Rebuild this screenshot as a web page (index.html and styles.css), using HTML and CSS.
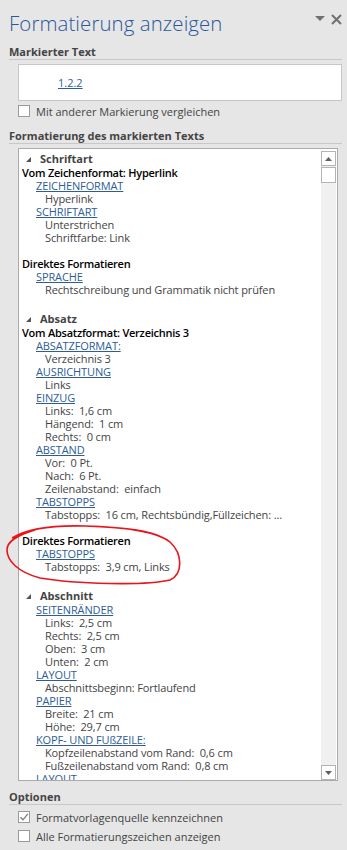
FILE: index.html
```html
<!DOCTYPE html>
<html lang="de">
<head>
  <meta charset="UTF-8">
  <meta name="viewport" content="width=device-width, initial-scale=1.0">
  <title>Formatierung anzeigen</title>
  <link rel="stylesheet" href="styles.css">
</head>
<body>

  <div class="pane">
    <!-- Titelleiste des Aufgabenbereichs -->
    <div class="title-bar">
      <h1>Formatierung anzeigen</h1>
      <div class="title-icons">
        <svg width="10" height="6" viewBox="0 0 10 6"><polygon points="0,0 10,0 5,5" fill="#707070"/></svg>
        <svg width="11" height="11" viewBox="0 0 11 11"><path d="M1 1 L10 10 M10 1 L1 10" stroke="#707070" stroke-width="2"/></svg>
      </div>
    </div>

    <h2 class="section-head">Markierter Text</h2>
    <div class="sample-box">
      <a class="sample-link">1.2.2</a>
    </div>
    <label class="check-row first">
      <span class="checkbox"></span>
      Mit anderer Markierung vergleichen
    </label>

    <h2 class="section-head spaced">Formatierung des markierten Texts</h2>
    <div class="list-box">
      <div class="list-content">
        <div class="sect"><span class="tri"></span>Schriftart</div>
        <div class="grp">Vom Zeichenformat: Hyperlink</div>
        <div class="lnk"><a>ZEICHENFORMAT</a></div>
        <div class="val">Hyperlink</div>
        <div class="lnk"><a>SCHRIFTART</a></div>
        <div class="val">Unterstrichen</div>
        <div class="val">Schriftfarbe: Link</div>
        <div class="gap"></div>
        <div class="grp">Direktes Formatieren</div>
        <div class="lnk"><a>SPRACHE</a></div>
        <div class="val">Rechtschreibung und Grammatik nicht prüfen</div>
        <div class="gap"></div>

        <div class="sect"><span class="tri"></span>Absatz</div>
        <div class="grp">Vom Absatzformat: Verzeichnis 3</div>
        <div class="lnk"><a>ABSATZFORMAT:</a></div>
        <div class="val">Verzeichnis 3</div>
        <div class="lnk"><a>AUSRICHTUNG</a></div>
        <div class="val">Links</div>
        <div class="lnk"><a>EINZUG</a></div>
        <div class="val">Links:  1,6 cm</div>
        <div class="val">Hängend:  1 cm</div>
        <div class="val">Rechts:  0 cm</div>
        <div class="lnk"><a>ABSTAND</a></div>
        <div class="val">Vor:  0 Pt.</div>
        <div class="val">Nach:  6 Pt.</div>
        <div class="val">Zeilenabstand:  einfach</div>
        <div class="lnk"><a>TABSTOPPS</a></div>
        <div class="val">Tabstopps:  16 cm, Rechtsbündig,Füllzeichen: ...</div>
        <div class="gap"></div>
        <div class="grp">Direktes Formatieren</div>
        <div class="lnk"><a>TABSTOPPS</a></div>
        <div class="val">Tabstopps:  3,9 cm, Links</div>
        <div class="gap"></div>

        <div class="sect"><span class="tri"></span>Abschnitt</div>
        <div class="lnk"><a>SEITENRÄNDER</a></div>
        <div class="val">Links:  2,5 cm</div>
        <div class="val">Rechts:  2,5 cm</div>
        <div class="val">Oben:  3 cm</div>
        <div class="val">Unten:  2 cm</div>
        <div class="lnk"><a>LAYOUT</a></div>
        <div class="val">Abschnittsbeginn: Fortlaufend</div>
        <div class="lnk"><a>PAPIER</a></div>
        <div class="val">Breite:  21 cm</div>
        <div class="val">Höhe:  29,7 cm</div>
        <div class="lnk"><a>KOPF- UND FUßZEILE:</a></div>
        <div class="val">Kopfzeilenabstand vom Rand:  0,6 cm</div>
        <div class="val">Fußzeilenabstand vom Rand:  0,8 cm</div>
        <div class="lnk"><a>LAYOUT</a></div>
      </div>

      <!-- Bildlaufleiste -->
      <div class="scrollbar">
        <div class="sb-btn">
          <svg width="7" height="4" viewBox="0 0 7 4"><polygon points="0,4 7,4 3.5,0" fill="#606060"/></svg>
        </div>
        <div class="sb-thumb"></div>
        <div class="sb-track"></div>
        <div class="sb-btn">
          <svg width="7" height="4" viewBox="0 0 7 4"><polygon points="0,0 7,0 3.5,4" fill="#606060"/></svg>
        </div>
      </div>
    </div>

    <h2 class="section-head options">Optionen</h2>
    <label class="check-row opt">
      <span class="checkbox">
        <svg width="10" height="10" viewBox="0 0 10 10"><path d="M1.5 5.2 L4 7.8 L8.8 1.8" stroke="#7a7a7a" stroke-width="1.3" fill="none"/></svg>
      </span>
      Formatvorlagenquelle kennzeichnen
    </label>
    <label class="check-row opt second">
      <span class="checkbox"></span>
      Alle Formatierungszeichen anzeigen
    </label>
  </div>

  <!-- rote Markierung von Hand -->
  <svg class="annotation" width="182" height="68" viewBox="0 0 182 68">
    <path d="M7 16 C 20 8, 45 3, 80 4 C 115 5, 150 8, 165 20 C 178 32, 178 52, 165 58 C 140 64, 70 62, 35 56 C 12 50, 2 38, 2 28 C 2 20, 10 14, 30 8" stroke="#e8141c" stroke-width="1.6" fill="none"/>
  </svg>

</body>
</html>
```

FILE: styles.css
```css
body {
  margin: 0;
  background-color: #e6e6e6;
  font-family: "Open Sans", "Noto Sans", sans-serif;
  font-size: 11px;
  color: #444444;
  position: relative;
  width: 347px;
  height: 850px;
  overflow: hidden;
}

.pane {
  padding: 0 5px 0 9px;
}

.title-bar {
  height: 46px;
  display: flex;
  align-items: center;
  justify-content: space-between;
}

.title-bar h1 {
  margin: 0;
  font-size: 20.4px;
  font-weight: 300;
  color: #2b579a;
  letter-spacing: 0.1px;
}

.title-icons {
  display: flex;
  align-items: center;
  gap: 6px;
  margin-top: -8px;
  margin-right: 0;
}

.section-head {
  margin: 0;
  font-size: 11px;
  line-height: 12px;
  font-weight: bold;
  color: #444444;
  padding-bottom: 1px;
  border-bottom: 1px solid #c8c8c8;
}

.section-head.spaced {
  margin-top: 13px;
}

.section-head.options {
  margin-top: 10px;
}

.sample-box {
  margin: 4px 0 0 9px;
  height: 37px;
  box-sizing: border-box;
  background: #ffffff;
  border: 1px solid #c6c6c6;
  display: flex;
  align-items: center;
  padding-left: 39px;
}

.sample-link,
.lnk a {
  color: #2e5d96;
  text-decoration: underline;
}

.check-row {
  display: flex;
  align-items: center;
  gap: 6px;
  height: 12px;
  margin-left: 9px;
  color: #444444;
}

.check-row.first {
  margin-top: 4px;
}

.check-row.opt {
  margin-top: 6px;
}

.check-row.second {
  margin-top: 7px;
}

.checkbox {
  width: 12px;
  height: 12px;
  box-sizing: border-box;
  border: 1px solid #9a9a9a;
  background: #ffffff;
  display: flex;
  align-items: center;
  justify-content: center;
}

.list-box {
  margin: 4px 4px 0 9px;
  height: 633px;
  box-sizing: border-box;
  border: 1px solid #ababab;
  background: #ffffff;
  display: flex;
  overflow: hidden;
}

.list-content {
  flex: 1;
  padding-left: 3px;
  overflow: hidden;
  letter-spacing: -0.12px;
}

.list-content > div {
  height: 13px;
  line-height: 13px;
  white-space: pre;
}

.list-content .sect {
  height: 14px;
  line-height: 14px;
  padding-top: 3px;
  padding-left: 4px;
  font-weight: bold;
  color: #444444;
  display: flex;
  align-items: center;
  letter-spacing: 0;
}

.tri {
  width: 0;
  height: 0;
  border-left: 5px solid transparent;
  border-bottom: 5px solid #555555;
  margin-right: 9px;
  margin-top: 1px;
}

.grp {
  font-weight: 600;
  color: #000000;
  letter-spacing: -0.25px;
}

.lnk {
  padding-left: 14px;
}

.val {
  padding-left: 23px;
  color: #444444;
}

.scrollbar {
  width: 15px;
  margin: 2px 1px 0 0;
  display: flex;
  flex-direction: column;
  background: #f0f0f0;
}

.sb-btn {
  height: 15px;
  box-sizing: border-box;
  border: 1px solid #b4b4b4;
  background: #ffffff;
  display: flex;
  align-items: center;
  justify-content: center;
}

.sb-thumb {
  height: 16px;
  margin-top: 1px;
  box-sizing: border-box;
  border: 1px solid #b4b4b4;
  background: #ffffff;
}

.sb-track {
  flex: 1;
}

.annotation {
  position: absolute;
  left: 5px;
  top: 522px;
  pointer-events: none;
}
```
